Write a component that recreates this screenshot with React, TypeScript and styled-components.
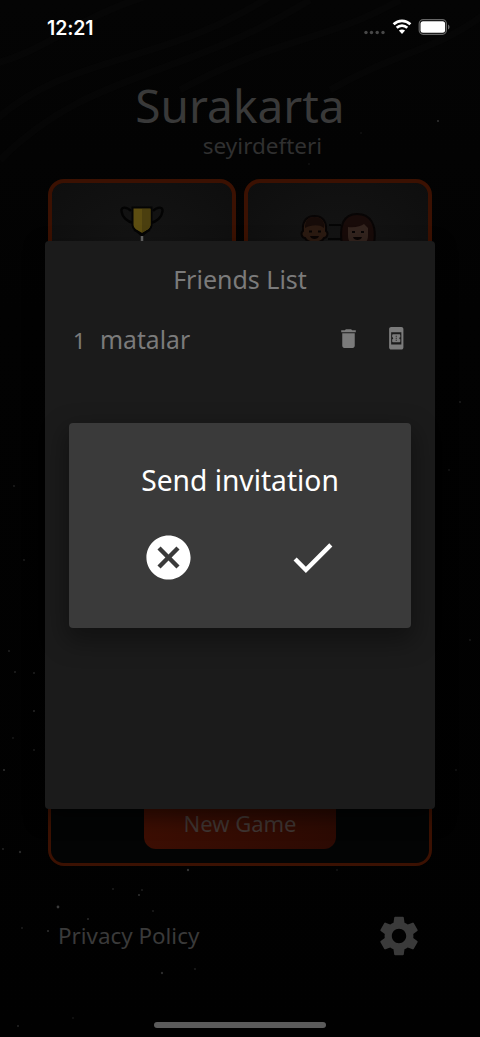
import React from "react";
import styled, { createGlobalStyle } from "styled-components";
import { MdBookOnline, MdCancel, MdCheck, MdDelete, MdSettings } from "react-icons/md";

const GlobalStyle = createGlobalStyle`
  * { box-sizing: border-box; }
  body { margin: 0; background: #020202; }
  button { border: 0; padding: 0; background: none; color: inherit; font: inherit; display: flex; }
`;

const Screen = styled.main`
  position: relative;
  width: 480px;
  height: 1037px;
  overflow: hidden;
  display: flex;
  flex-direction: column;
  background: linear-gradient(#040404, #020202 30%, #010101);
  font-family: "Noto Sans", "Open Sans", sans-serif;
`;

const Backdrop = styled.svg`
  position: absolute;
  inset: 0;
`;

const StatusBar = styled.header`
  position: relative;
  flex: none;
  height: 54px;
  padding: 0 30px 0 47px;
  display: flex;
  align-items: center;
  justify-content: space-between;
  color: #fff;
`;

const Clock = styled.span`
  padding-top: 1px;
  font: 600 19.5px/54px "Inter", sans-serif;
  letter-spacing: -0.1px;
`;

const Heading = styled.div`
  position: relative;
  flex: none;
  height: 125px;
  display: flex;
  flex-direction: column;
  align-items: center;
`;

const Title = styled.h1`
  margin: 25px 0 0;
  font-size: 46px;
  font-weight: 400;
  line-height: 52px;
  color: #393939;
`;

const Subtitle = styled.div`
  margin: 3px 0 0 45px;
  font-size: 22.5px;
  line-height: 24px;
  color: #303030;
`;

const CardRow = styled.div`
  position: relative;
  flex: none;
  display: flex;
  gap: 8px;
  padding: 0 48px;
`;

const MenuCard = styled.div`
  flex: 1;
  height: 170px;
  padding-top: 22px;
  display: flex;
  justify-content: center;
  border: 4px solid #3b1102;
  border-radius: 16px;
  background: radial-gradient(#151515, #0e0e0e);
`;

const GameCard = styled.div`
  position: relative;
  flex: none;
  height: 509px;
  margin: 8px 48px 0;
  padding-bottom: 14px;
  display: flex;
  align-items: flex-end;
  justify-content: center;
  border: 3px solid #3b1102;
  border-radius: 16px;
  background: #030404;
`;

const NewGame = styled.button`
  width: 192px;
  height: 52px;
  justify-content: center;
  border-radius: 12px;
  background: linear-gradient(90deg, #3c0e03, #2c0a03);
  color: #3f3532;
  font-size: 22px;
  line-height: 53px;
`;

const Footer = styled.footer`
  position: relative;
  flex: 1;
  padding: 0 57px 32px 58px;
  display: flex;
  align-items: center;
  justify-content: space-between;
  color: #3a3a3a;
  font-size: 22.4px;
`;

const HomeBar = styled.div`
  position: absolute;
  left: 154px;
  bottom: 9px;
  width: 172px;
  height: 6px;
  border-radius: 3px;
  background: #5b5b5b;
`;

const Panel = styled.section`
  position: absolute;
  left: 45px;
  top: 241px;
  width: 390px;
  height: 568px;
  border-radius: 4px;
  background: #1b1b1b;
  color: #7b7b7b;
  box-shadow: 0 8px 20px rgba(0, 0, 0, 0.5);
`;

const PanelTitle = styled.h2`
  margin: 19px 0 0;
  text-align: center;
  font-size: 25px;
  font-weight: 400;
  line-height: 38px;
`;

const FriendRow = styled.div`
  height: 40px;
  margin-top: 22px;
  padding: 0 27px 0 28px;
  display: flex;
  align-items: center;
  line-height: 40px;
`;

const Rank = styled.span`
  width: 27px;
  font-size: 22px;
`;

const FriendName = styled.span`
  flex: 1;
  font-size: 24.700px;
`;

const RowActions = styled.div`
  display: flex;
  gap: 23px;
  padding-bottom: 3px;
`;

const Dialog = styled.section`
  position: absolute;
  left: 69px;
  top: 423px;
  width: 342px;
  height: 205px;
  border-radius: 4px;
  background: #3a3a3a;
  color: #fff;
  box-shadow: 0 10px 24px 4px rgba(0, 0, 0, 0.35);
`;

const DialogTitle = styled.h2`
  margin: 37px 0 0;
  text-align: center;
  font-size: 28.2px;
  font-weight: 400;
  line-height: 40px;
`;

const DialogActions = styled.div`
  margin: 31px 27px 0;
  display: flex;
  justify-content: space-around;
`;

const stars: [number, number, number, string][] = [
  [438, 121, 1, "#333"], [188, 870, 1.2, "#333"], [337, 870, 0.8, "#222"], [113, 889, 0.8, "#333"],
  [142, 890, 0.8, "#333"], [139, 895, 1, "#333"], [58, 907, 1.4, "#3a3a3a"], [88, 919, 1, "#2a2a2a"],
  [153, 911, 0.8, "#333"], [48, 931, 1, "#303030"], [162, 973, 1.2, "#2c2c2c"], [195, 969, 0.8, "#333"],
  [9, 651, 1, "#222"], [15, 672, 1, "#222"], [34, 673, 1, "#222"], [34, 711, 1, "#2a2a2a"],
  [4, 770, 1, "#333"], [34, 750, 1.1, "#1c1c1c"], [13, 738, 0.9, "#1c1c1c"], [3, 849, 0.9, "#292929"],
  [20, 852, 1.2, "#292929"], [22, 928, 1.1, "#1c1c1c"], [18, 1026, 1.1, "#222"], [361, 133, 0.8, "#1c1c1c"],
  [309, 164, 0.8, "#1c1c1c"], [14, 486, 0.9, "#222"], [24, 560, 0.9, "#222"], [460, 402, 0.9, "#222"],
  [449, 470, 0.8, "#222"], [470, 640, 0.9, "#1c1c1c"], [456, 770, 0.8, "#222"], [73, 1018, 0.8, "#222"],
];

const Trophy = () => (
  <svg width="44" height="52" viewBox="0 0 44 52" fill="none">
    <path d="M11 6C6 1 1 2 1.500 6c.5 6 6 11 12 12M33 6c5-5 10-4 9.500 0-.5 6-6 11-12 12" stroke="#030303" strokeWidth="2.400" />
    <path d="M12.500 2.500h19V20c0 4-4 6-9.500 9-5.500-3-9.500-5-9.500-9z" fill="#5c4d11" stroke="#050505" strokeWidth="2" />
    <path d="M22 4h8.500v16c0 3-4 5-8.500 7.500z" fill="#4b3f0f" />
    <path d="M14 25c5 1 5 5 8 5s3-4 8-5" stroke="#050505" strokeWidth="2" />
    <path d="M22 31v12" stroke="#666" strokeWidth="2.500" />
    <path d="M12 44h20v6H12z" fill="#2b1606" />
  </svg>
);

const Friends = () => (
  <svg width="78" height="56" viewBox="0 -8 78 56">
    <path d="M30 12h12M29 26h13" stroke="#050505" strokeWidth="2" />
    <path d="M4 18C3 8 8 3 15.500 3S28 8 27 18c3 2 1 7-2 7-3 6-16 6-19 0-3 0-5-5-2-7z" fill="#2b1a11" stroke="#080505" strokeWidth="2" />
    <path d="M6 15C6 7 9 4 15.500 4S26 8 25 15c-5-4-13-3-19 0z" fill="#160b08" />
    <path d="M43 31C40 13 44 1 58 1s20 11 17 30z" fill="#180b09" stroke="#080505" strokeWidth="2" />
    <path d="M49 14c7 1 13-1 16-3l4 4v8c0 6-4 9-10 9s-10-3-10-9z" fill="#33241e" />
    <path d="M10 18.500h3m6 0h3M53 19h3m6 0h3" stroke="#080505" strokeWidth="2" />
    <path d="M11 23h9c-1 4-8 4-9 0zM54 24h9c-1 4-8 4-9 0z" fill="#0a0504" />
  </svg>
);

const StatusIcons = () => (
  <svg width="88" height="20" viewBox="362 17 88 20" fill="none">
    {[366, 371.500, 377.200, 383].map((x) => <circle key={x} cx={x} cy="32.500" r="1.700" fill="#484848" />)}
    <g stroke="#fff" strokeWidth="2.700">
      <path d="M393.600 24.300c4.800-4.600 12-4.600 16.800 0" />
      <path d="M396.700 27.800c3-2.900 7.600-2.900 10.600 0" />
    </g>
    <path d="M398.900 30.600c1.800-1.600 4.400-1.600 6.200 0L402 34z" fill="#fff" />
    <rect x="419.200" y="19.700" width="27.200" height="14.600" rx="4" stroke="#666" strokeWidth="1.200" />
    <rect x="420.500" y="21.200" width="24.600" height="11.600" rx="2.500" fill="#fff" />
    <path d="M448 24.500c2 .8 2 4.200 0 5z" fill="#666" />
  </svg>
);

export default function App() {
  return (
    <Screen>
      <GlobalStyle />
      <Backdrop width="480" height="1037" viewBox="0 0 480 1037" fill="none">
        <g stroke="#080808" strokeWidth="7" opacity=".55">
          <path d="M-10 65C50 50 70 20 150 -5M-10 125C70 50 160 70 280 -10M0 160C90 70 180 80 310 0" />
          <path d="M180 90C270 40 330 40 400 0M330 90C400 50 440 50 490 10" />
        </g>
        {stars.map(([x, y, r, fill]) => <circle key={`${x}-${y}`} cx={x} cy={y} r={r} fill={fill} />)}
      </Backdrop>

      <StatusBar>
        <Clock>12:21</Clock>
        <StatusIcons />
      </StatusBar>
      <Heading>
        <Title>Surakarta</Title>
        <Subtitle>seyirdefteri</Subtitle>
      </Heading>
      <CardRow>
        <MenuCard><Trophy /></MenuCard>
        <MenuCard><Friends /></MenuCard>
      </CardRow>
      <GameCard>
        <NewGame>New Game</NewGame>
      </GameCard>
      <Footer>
        <span>Privacy Policy</span>
        <MdSettings size={48} />
      </Footer>
      <HomeBar />

      <Panel>
        <PanelTitle>Friends List</PanelTitle>
        <FriendRow>
          <Rank>1</Rank>
          <FriendName>matalar</FriendName>
          <RowActions>
            <button aria-label="Delete"><MdDelete size={25} /></button>
            <button aria-label="Invite"><MdBookOnline size={24.5} /></button>
          </RowActions>
        </FriendRow>
      </Panel>

      <Dialog>
        <DialogTitle>Send invitation</DialogTitle>
        <DialogActions>
          <button aria-label="Cancel"><MdCancel size={53} /></button>
          <button aria-label="Confirm"><MdCheck size={53} /></button>
        </DialogActions>
      </Dialog>
    </Screen>
  );
}
